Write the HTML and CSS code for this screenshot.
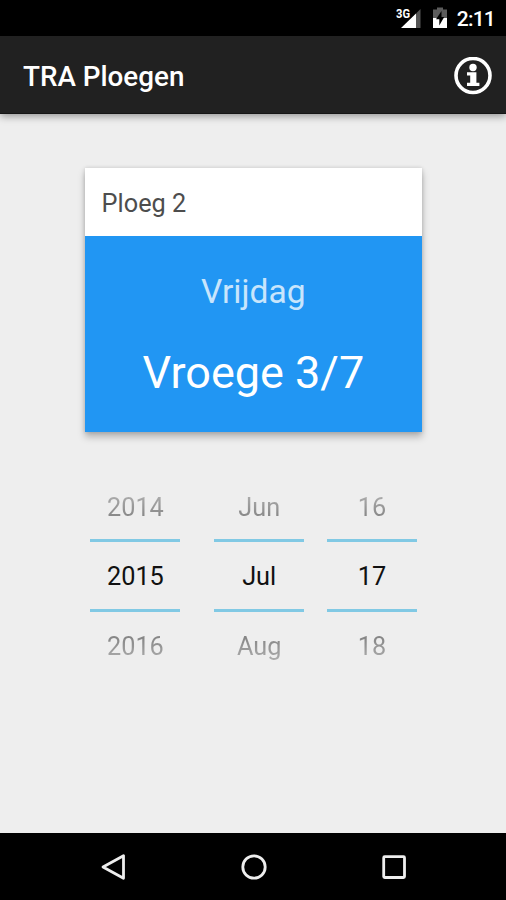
FILE: index.html
```html
<!DOCTYPE html>
<html lang="nl">
<head>
<meta charset="utf-8">
<title>TRA Ploegen</title>
<link rel="stylesheet" href="styles.css">
</head>
<body>
<div class="status">
  <svg class="signal" width="28" height="36" viewBox="0 0 28 36">
    <path d="M17 13.5 21.5 9V28H17z" fill="#555"/>
    <path d="M2 28 17 13.5V28z" fill="#fff"/>
    <text class="network" x="-3" y="17.5" textLength="14" lengthAdjust="spacingAndGlyphs">3G</text>
  </svg>
  <svg class="battery" width="14" height="36" viewBox="0 0 14 36">
    <path d="M0 9.5H4V7.5H10V9.5H14V18H0z" fill="#5c5c5c"/>
    <path d="M0 18H14V28H0z" fill="#fff"/>
    <path d="M8.5 11 3 19.2H6.3V25.5L11.2 17H8.5z" fill="#000"/>
  </svg>
  <span class="time">2:11</span>
</div>
<header class="bar">
  <h1>TRA Ploegen</h1>
  <svg width="38" height="38" viewBox="0 0 38 38">
    <circle cx="19" cy="18.5" r="17" fill="none" stroke="#fff" stroke-width="3.6"/>
    <circle cx="19" cy="10.5" r="3.7" fill="#fff"/>
    <path d="M13 15.3H22.4V25.7H25.4V29H13V25.7H16.2V18.5H13z" fill="#fff"/>
  </svg>
</header>
<main>
  <section class="card">
    <div class="team">Ploeg 2</div>
    <div class="shift">
      <div class="day">Vrijdag</div>
      <div class="name">Vroege 3/7</div>
    </div>
  </section>
  <section class="picker">
    <div class="col"><span class="prev">2014</span><b>2015</b><span class="next">2016</span></div>
    <div class="col"><span class="prev">Jun</span><b>Jul</b><span class="next">Aug</span></div>
    <div class="col"><span class="prev">16</span><b>17</b><span class="next">18</span></div>
  </section>
</main>
<nav>
  <svg width="28" height="28" viewBox="0 0 28 28"><path d="M4 14 24.5 2.7V25.3z"/></svg>
  <svg width="28" height="28" viewBox="0 0 28 28"><circle cx="14" cy="14" r="11.2"/></svg>
  <svg width="28" height="28" viewBox="0 0 28 28"><rect x="3.7" y="3.7" width="20.8" height="20.8" rx="1"/></svg>
</nav>
</body>
</html>
```
FILE: styles.css
```css
* { box-sizing: border-box; }
body {
  margin: 0;
  width: 506px;
  height: 900px;
  display: flex;
  flex-direction: column;
  background: #eee;
  font-family: Roboto, sans-serif;
  overflow: hidden;
}
.status {
  height: 36px;
  background: #000;
  display: flex;
  justify-content: flex-end;
  padding-right: 11px;
}
.signal { margin-right: 5.5px; overflow: visible; }
.network { font-size: 12px; font-weight: 700; fill: #fff; stroke: #000; stroke-width: 2px; paint-order: stroke; }
.battery { margin-right: 10px; }
.time { color: #fff; font-size: 21px; font-weight: 500; line-height: 39px; letter-spacing: -0.8px; }
.bar {
  height: 78px;
  background: #212121;
  border-bottom: 1px solid #151515;
  box-shadow: 0 2px 8px rgba(0, 0, 0, .4);
  display: flex;
  justify-content: space-between;
  align-items: center;
  padding: 2px 14px 0 23px;
}
h1 { margin: 0; padding-top: 2px; color: #fff; font-size: 27.8px; font-weight: 500; line-height: 40px; }
main { flex: 1; padding: 54px 0 0; }
.card {
  width: 337.5px;
  height: 264px;
  margin-left: 84.6px;
  background: #fff;
  box-shadow: 0 5px 7px rgba(0, 0, 0, .25), 0 0 4px rgba(0, 0, 0, .15);
}
.team { height: 68px; padding-left: 17px; font-size: 25.3px; line-height: 72px; color: #4d4d4d; }
.shift { height: 196px; background: #2196f3; text-align: center; padding-top: 31px; }
.day { color: #c8e5fc; font-size: 33.6px; line-height: 50px; }
.name { color: #fff; font-size: 45px; line-height: 60px; margin-top: 26px; }
.picker {
  display: flex;
  margin: 41px 0 0 90.4px;
}
.col { width: 90px; display: flex; flex-direction: column; text-align: center; font-size: 25.3px; }
.col:nth-child(2) { margin: 0 22.8px 0 33.8px; }
.col span { height: 66px; line-height: 70px; color: transparent; background-clip: text; -webkit-background-clip: text; }
.prev { background-image: linear-gradient(#adadad 22px, #808080 48px); }
.next { background-image: linear-gradient(#808080 22px, #adadad 48px); }
.col b { height: 73px; line-height: 70px; font-weight: 400; color: #111; border: solid #81c9e4; border-width: 3px 0; }
nav {
  height: 67px;
  background: #000;
  display: flex;
  justify-content: center;
  align-items: center;
  gap: 112.5px;
  padding-left: 1px;
}
nav svg { fill: none; stroke: #eee; stroke-width: 2.8; stroke-linejoin: round; }
```
